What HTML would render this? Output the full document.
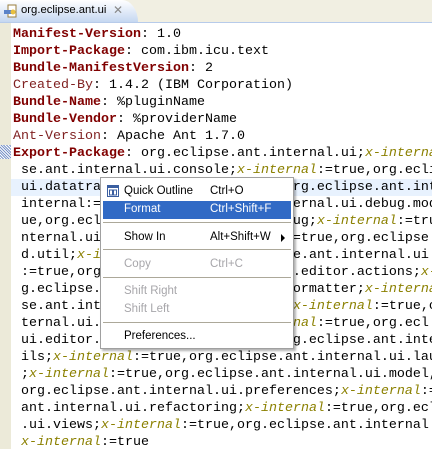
<!DOCTYPE html>
<html><head><style>
body{margin:0;width:432px;height:449px;overflow:hidden;background:#fff;position:relative;font-family:"Liberation Sans",sans-serif}
#tabbar{position:absolute;left:0;top:0;width:432px;height:22px;background:#f1efe2;border-bottom:1px solid #b7cbea}
#tab{position:absolute;left:0;top:0;width:138px;height:22px;background:linear-gradient(#ffffff,#c5d7f1);border-top-right-radius:16px 22px}
#tab span{position:absolute;left:21px;top:4px;font-size:11.3px;color:#000}
#gut{position:absolute;left:0;top:23px;width:11px;height:426px;background:#ecead9}
#code{position:absolute;left:13px;top:26px;font-family:"Liberation Mono",monospace;font-size:13.33px;line-height:17px;white-space:pre;color:#000}
.k{color:#800000;font-weight:bold}.k2{color:#7f1f1f}
.x{color:#8b8000;font-style:italic}
#hl{position:absolute;left:11px;top:179px;width:421px;height:17px;background:#e8f2fe}
#menu{position:absolute;left:100px;top:177px;width:192px;height:170px;background:#fff;border:1px solid #a0a0a0;box-shadow:2px 2px 2px rgba(0,0,0,.3);font-size:11.5px}
.it{position:absolute;left:0;width:192px;height:18px}
.it .l{position:absolute;left:23px;top:2px}.it .a{position:absolute;left:109px;top:2px}
.d{color:#a7a6aa}
.sep{position:absolute;left:2px;width:188px;border-top:1px solid #aca899}
</style></head><body>
<div id="tabbar"><div id="tab"><svg style="position:absolute;left:3px;top:4px" width="16" height="15"><rect x="5" y="1" width="8" height="12" fill="#fff" stroke="#9a7d3c"/><rect x="1" y="6" width="8" height="4" fill="#5a82c8"/><circle cx="10" cy="8" r="2.5" fill="#e8c040"/></svg><span>org.eclipse.ant.ui</span><span style="left:113px;top:3px;color:#888;font-size:12px">✕</span></div></div>
<div id="gut"></div>
<div style="position:absolute;left:0;top:145px;width:11px;height:14px;background:repeating-linear-gradient(45deg,#7b95c8 0 1px,#fff 1px 2px)"></div>
<div id="hl"></div>
<div id="code"><span class="k">Manifest-Version</span>: 1.0
<span class="k">Import-Package</span>: com.ibm.icu.text
<span class="k">Bundle-ManifestVersion</span>: 2
<span class="k2">Created-By</span>: 1.4.2 (IBM Corporation)
<span class="k">Bundle-Name</span>: %pluginName
<span class="k">Bundle-Vendor</span>: %providerName
<span class="k2">Ant-Version</span>: Apache Ant 1.7.0
<span class="k">Export-Package</span>: org.eclipse.ant.internal.ui;<span class="x">x-interna</span>
 se.ant.internal.ui.console;<span class="x">x-internal</span>:=true,org.ecli
 ui.datatransfer;x-internal:=true,org.eclipse.ant.int
 internal:=true,org.eclipse.ant.internal.ui.debug.mod
 ue,org.eclipse.ant.internal.ui.debug;<span class="x">x-internal</span>:=true,
 nternal.ui.debug.model;x-internal:=true,org.eclipse.a
 d.util;<span class="x">x-i</span>nternal:=true,org.eclipse.ant.internal.ui
 :=true,org.eclipse.ant.internal.ui.editor.actions;<span class="x">x-</span>
 g.eclipse.ant.internal.ui.editor.formatter;<span class="x">x-interna</span>
 se.ant.internal.ui.editor.outline;<span class="x">x-internal</span>:=true,o
 ternal.ui.editor.templates;<span class="x">x-internal</span>:=true,org.ecl
 ui.editor.text;x-internal:=true,org.eclipse.ant.inte
 ils;<span class="x">x-internal</span>:=true,org.eclipse.ant.internal.ui.lau
 ;<span class="x">x-internal</span>:=true,org.eclipse.ant.internal.ui.model,
 org.eclipse.ant.internal.ui.preferences;<span class="x">x-internal</span>:=
 ant.internal.ui.refactoring;<span class="x">x-internal</span>:=true,org.ecl
 .ui.views;<span class="x">x-internal</span>:=true,org.eclipse.ant.internal
 <span class="x">x-internal</span>:=true</div>
<div id="menu">
<div class="it" style="top:5px"><svg style="position:absolute;left:6px;top:2px" width="12" height="12"><rect x=".5" y=".5" width="11" height="11" fill="#fff" stroke="#3a5ea0"/><rect x="1" y="1" width="10" height="2" fill="#3a5ea0"/><rect x="2.5" y="5" width="3" height="5" fill="none" stroke="#3a5ea0"/><rect x="6.5" y="5" width="3" height="5" fill="none" stroke="#3a5ea0"/></svg><span class="l">Quick Outline</span><span class="a">Ctrl+O</span></div>
<div class="it" style="top:23px;left:2px;width:188px;background:#316ac5;color:#fff"><span class="l" style="left:21px">Format</span><span class="a" style="left:107px">Ctrl+Shift+F</span></div>
<div class="sep" style="top:44px"></div>
<div class="it" style="top:51px"><span class="l">Show In</span><span class="a">Alt+Shift+W</span><span style="position:absolute;left:180px;top:5px;border-left:4px solid #000;border-top:4px solid transparent;border-bottom:4px solid transparent"></span></div>
<div class="sep" style="top:71px"></div>
<div class="it d" style="top:78px"><span class="l">Copy</span><span class="a">Ctrl+C</span></div>
<div class="sep" style="top:99px"></div>
<div class="it d" style="top:105px"><span class="l">Shift Right</span></div>
<div class="it d" style="top:123px"><span class="l">Shift Left</span></div>
<div class="sep" style="top:144px"></div>
<div class="it" style="top:150px"><span class="l">Preferences...</span></div>
</div>
</body></html>
